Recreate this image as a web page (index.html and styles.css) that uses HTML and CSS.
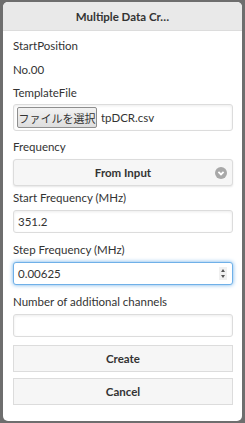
FILE: index.html
```html
<!DOCTYPE html>
<html>
<head>
<meta charset="utf-8">
<link rel="stylesheet" href="styles.css">
</head>
<body>
<div class="dialog">
  <div class="header">Multiple Data Cr…</div>
  <div class="content">
    <div class="label l-start">StartPosition</div>
    <div class="label l-no">No.00</div>
    <div class="label l-tpl">TemplateFile</div>
    <div class="field file">
      <span class="file-btn">ファイルを選択</span>
      <span class="file-name">tpDCR.csv</span>
    </div>
    <div class="label l-freq">Frequency</div>
    <div class="select">
      <span class="select-text">From Input</span>
      <span class="select-icon">
        <svg width="12" height="12" viewBox="0 0 12 12"><circle cx="6" cy="6" r="6" fill="#a8a8a8"/><path d="M3.4 4.8 L6 7.4 L8.6 4.8" stroke="#fff" stroke-width="1.8" fill="none"/></svg>
      </span>
    </div>
    <div class="label l-sf">Start Frequency (MHz)</div>
    <div class="field text">351.2</div>
    <div class="label l-step">Step Frequency (MHz)</div>
    <div class="field text focus">
      <span>0.00625</span>
      <span class="spin"><span class="up"></span><span class="down"></span></span>
    </div>
    <div class="label l-num">Number of additional channels</div>
    <div class="field text"></div>
    <div class="btn b-create">Create</div>
    <div class="btn b-cancel">Cancel</div>
  </div>
</div>
</body>
</html>
```
FILE: styles.css
```css
html, body {
  margin: 0;
  padding: 0;
}
body {
  width: 245px;
  height: 423px;
  background: #6e6e6e;
  font-family: "Lato", "Open Sans", sans-serif;
  font-size: 11.5px;
  color: #333;
  overflow: hidden;
}
.dialog {
  margin: 2px 3px 0 3px;
  height: 419px;
  background: #fff;
  border-radius: 5px;
  overflow: hidden;
  box-sizing: border-box;
}
.header {
  height: 28px;
  background: #e9e9e9;
  border-bottom: 1px solid #dcdcdc;
  display: flex;
  align-items: center;
  justify-content: center;
  font-weight: bold;
  color: #333;
}
.content {
  display: flex;
  flex-direction: column;
  padding: 7px 9px 0 10px;
}
.label {
  height: 16px;
  line-height: 16px;
  color: #333;
}
.l-no { margin-top: 8px; }
.l-tpl { margin-top: 7px; }
.file { margin-top: 3px; }
.l-freq { margin-top: 8px; }
.select { margin-top: 4px; }
.l-sf { margin-top: 4px; }
.l-sf + .field { margin-top: 4px; }
.l-step { margin-top: 9px; }
.l-step + .field { margin-top: 4px; }
.l-num { margin-top: 9px; }
.l-num + .field { margin-top: 4px; }
.field {
  box-sizing: border-box;
  border: 1px solid #dcdcdc;
  border-radius: 3px;
  background: #fff;
  box-shadow: inset 0 1px 3px rgba(0,0,0,0.08);
  display: flex;
  align-items: center;
}
.file {
  height: 27px;
  padding-left: 3px;
}
.file-btn {
  box-sizing: border-box;
  height: 21px;
  width: 80px;
  border: 1px solid #8e8e8e;
  border-radius: 2px;
  background: linear-gradient(#f2f2f2, #dedede);
  font-family: "Noto Sans CJK JP", sans-serif;
  font-size: 11px;
  color: #333;
  display: flex;
  align-items: center;
  justify-content: center;
}
.file-name {
  margin-left: 4px;
}
.text {
  height: 23px;
  padding-left: 4px;
  padding-right: 5px;
  justify-content: space-between;
}
.focus {
  border-color: #6fb0e8;
  box-shadow: 0 0 4px #6fb0e8;
}
.spin {
  display: flex;
  flex-direction: column;
  align-items: center;
  gap: 3px;
  width: 8px;
  background: #f0f0f0;
  padding: 2px 0;
}
.up {
  width: 0; height: 0;
  border-left: 2px solid transparent;
  border-right: 2px solid transparent;
  border-bottom: 3px solid #555;
}
.down {
  width: 0; height: 0;
  border-left: 2px solid transparent;
  border-right: 2px solid transparent;
  border-top: 3px solid #555;
}
.select {
  box-sizing: border-box;
  height: 27px;
  border: 1px solid #dcdcdc;
  border-radius: 3px;
  background: #f6f6f6;
  box-shadow: 0 1px 2px rgba(0,0,0,0.1);
  display: flex;
  align-items: center;
  justify-content: center;
  position: relative;
  font-weight: bold;
}
.select-icon {
  position: absolute;
  right: 5px;
  top: 7px;
  width: 12px;
  height: 12px;
}
.select-icon svg { display: block; }
.btn {
  box-sizing: border-box;
  height: 27px;
  border: 1px solid #dcdcdc;
  background: #f6f6f6;
  display: flex;
  align-items: center;
  justify-content: center;
  font-weight: bold;
}
.b-create { margin-top: 8px; }
.b-cancel { margin-top: 6px; }
```
